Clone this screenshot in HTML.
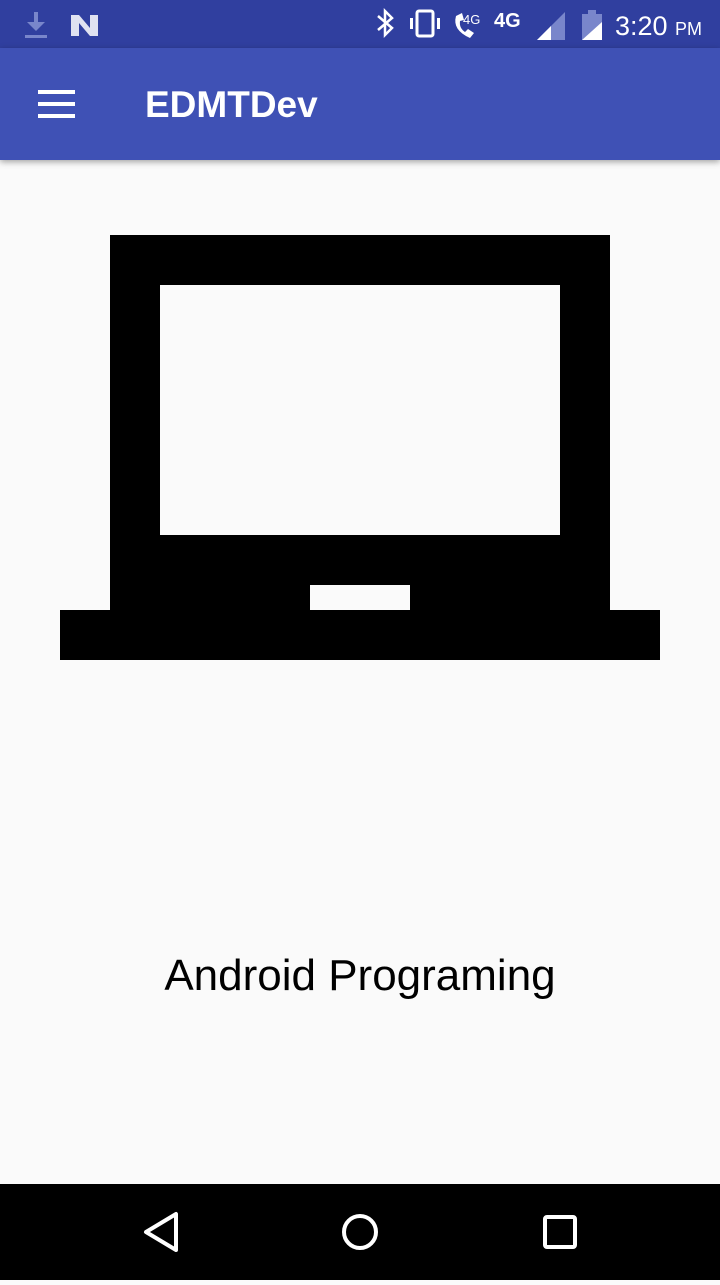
<!DOCTYPE html>
<html><head><style>
body{margin:0;width:720px;height:1280px;position:relative;background:#fafafa;font-family:"Liberation Sans",sans-serif;overflow:hidden}
.sb{position:absolute;top:0;left:0;width:720px;height:48px;background:#303f9f;color:#fff}
.ab{position:absolute;top:48px;left:0;width:720px;height:112px;background:#3f51b5;box-shadow:0 2px 6px rgba(0,0,0,.35)}
.nav{position:absolute;top:1184px;left:0;width:720px;height:96px;background:#000}
.b{position:absolute;background:#000}
</style></head><body>
<div class="sb">
<svg width="720" height="48" style="position:absolute;left:0;top:0">
<g fill="#7986cb"><rect x="34" y="12" width="4" height="12"/><polygon points="27,22 45,22 36,31"/><rect x="25" y="35" width="22" height="3"/></g>
<polygon points="71,15 79,15 90,28 90,15 98,15 98,36 90,36 79,23 79,36 71,36" fill="#fff" opacity=".85"/>
<path d="M378,16 L392,28 L385,35 L385,11 L392,18 L378,30" stroke="#fff" stroke-width="2.5" fill="none"/>
<rect x="417" y="11" width="16" height="25" rx="2" stroke="#fff" stroke-width="3" fill="none"/>
<rect x="410" y="18" width="3" height="11" fill="#fff"/><rect x="437" y="18" width="3" height="11" fill="#fff"/>
<path d="M456,16 Q452,30 470,38 L474,33 L468,29 L465,32 Q459,28 460,21 L464,20 L462,13 Z" fill="#fff"/>
<text x="463" y="24" font-size="13" fill="#fff">4G</text>
<text x="494" y="27" font-size="20" font-weight="bold" fill="#fff">4G</text>
<polygon points="537,40 565,12 565,40" fill="#7986cb"/><polygon points="537,40 551,26 551,40" fill="#fff"/>
<rect x="582" y="14" width="20" height="26" fill="#7986cb"/><rect x="588" y="10" width="8" height="5" fill="#7986cb"/>
<polygon points="582,40 602,22 602,40" fill="#fff"/>
<text x="615" y="35" font-size="27" fill="#fff">3:20</text><text x="675" y="35" font-size="18" fill="#fff">PM</text>
</svg></div>
<div class="ab">
<div style="position:absolute;left:38px;top:42px;width:37px;height:4px;background:#fff"></div>
<div style="position:absolute;left:38px;top:54px;width:37px;height:4px;background:#fff"></div>
<div style="position:absolute;left:38px;top:66px;width:37px;height:4px;background:#fff"></div>
<div style="position:absolute;left:145px;top:36px;color:#fff;font-size:37px;font-weight:bold">EDMTDev</div>
</div>
<div class="b" style="left:110px;top:235px;width:500px;height:50px"></div>
<div class="b" style="left:110px;top:235px;width:50px;height:375px"></div>
<div class="b" style="left:560px;top:235px;width:50px;height:375px"></div>
<div class="b" style="left:110px;top:535px;width:500px;height:50px"></div>
<div class="b" style="left:110px;top:585px;width:200px;height:25px"></div>
<div class="b" style="left:410px;top:585px;width:200px;height:25px"></div>
<div class="b" style="left:60px;top:610px;width:600px;height:50px"></div>
<div style="position:absolute;left:0;width:720px;top:951px;text-align:center;font-size:44px;color:#000">Android Programing</div>
<div class="nav"><svg width="720" height="96">
<polygon points="176,30 176,66 146,48" stroke="#fff" stroke-width="4" fill="none" stroke-linejoin="round"/>
<circle cx="360" cy="48" r="16" stroke="#fff" stroke-width="4" fill="none"/>
<rect x="545" y="33" width="30" height="30" rx="2" stroke="#fff" stroke-width="4" fill="none"/>
</svg></div>
</body></html>
